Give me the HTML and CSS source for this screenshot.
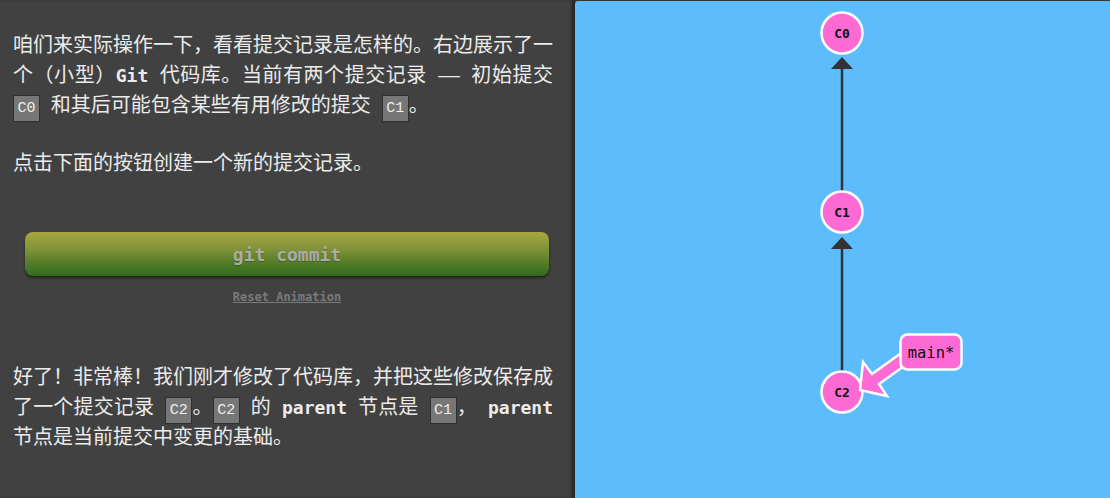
FILE: index.html
```html
<!DOCTYPE html>
<html lang="zh-CN">
<head>
<meta charset="utf-8">
<title>Git Commit</title>
<link rel="stylesheet" href="styles.css">
</head>
<body>
<div class="app">
  <section class="lesson">
    <p class="para">咱们来实际操作一下，看看提交记录是怎样的。右边展示了一个（小型）<strong>Git</strong> 代码库。当前有两个提交记录 <span class="dash">——</span> 初始提交 <code>C0</code> 和其后可能包含某些有用修改的提交 <code>C1</code>。</p>
    <p class="para">点击下面的按钮创建一个新的提交记录。</p>
    <div class="actions">
      <button class="commit-btn" type="button">git commit</button>
      <a class="reset" href="#">Reset Animation</a>
    </div>
    <p class="para">好了！非常棒！我们刚才修改了代码库，并把这些修改保存成了一个提交记录 <code>C2</code>。<code>C2</code> 的 <strong>parent</strong> 节点是 <code>C1</code>， <strong>parent</strong> 节点是当前提交中变更的基础。</p>
  </section>
  <section class="canvas">
    <svg class="graph" viewBox="0 0 535 497" width="535" height="497" xmlns="http://www.w3.org/2000/svg">
      <g class="edges">
        <line x1="267" y1="191" x2="267" y2="64" stroke="#333" stroke-width="2.5"/>
        <polygon points="267,56 256,68 278,68" fill="#333"/>
        <line x1="267" y1="370" x2="267" y2="244" stroke="#333" stroke-width="2.5"/>
        <polygon points="267,236 256,248 278,248" fill="#333"/>
      </g>
      <g class="nodes">
        <circle cx="267" cy="32" r="20.5" fill="#fd6ad4" stroke="#fff" stroke-width="2.5"/>
        <text x="267" y="36.5" class="node-label">C0</text>
        <circle cx="267" cy="211" r="20.5" fill="#fd6ad4" stroke="#fff" stroke-width="2.5"/>
        <text x="267" y="215.5" class="node-label">C1</text>
        <circle cx="267" cy="391" r="20.5" fill="#fd6ad4" stroke="#fff" stroke-width="2.5"/>
        <text x="267" y="395.5" class="node-label">C2</text>
      </g>
      <g class="branch">
        <polygon points="329,350 297,373 288,361 285,389 312,395 304,383 336,360" fill="#fd6ad4" stroke="#fff" stroke-width="2.5" stroke-linejoin="miter"/>
        <rect x="325.5" y="333.5" width="61" height="35" rx="7" fill="#fd6ad4" stroke="#fff" stroke-width="2.5"/>
        <text x="356" y="356.5" class="branch-label">main*</text>
      </g>
    </svg>
  </section>
</div>
</body>
</html>
```

FILE: styles.css
```css
* { box-sizing: border-box; }

html, body {
  margin: 0;
  padding: 0;
  width: 1110px;
  height: 498px;
  overflow: hidden;
  background: #3b3b3b;
}

.app {
  display: flex;
  height: 498px;
}

.lesson {
  width: 575px;
  flex: 0 0 575px;
  background: #414141;
  padding: 30px 22px 0 13px;
  color: #ececec;
  font-family: "DejaVu Sans Mono", "Noto Sans CJK SC", monospace;
  font-size: 20px;
  line-height: 30px;
  word-spacing: -1.2px;
  box-shadow: inset -4px 0 3px rgba(0, 0, 0, 0.22);
}

.para {
  margin: 0 0 28px;
  height: auto;
  text-align: justify;
}

.para strong {
  font-size: 18px;
  line-height: 18px;
  font-weight: bold;
}

.dash {
  font-size: 18px;
  line-height: 18px;
}

.para code {
  font-family: "Liberation Mono", monospace;
  font-size: 15px;
  line-height: 15px;
  padding: 4px 3.5px;
  background: #777;
  color: #eee;
  border: 1px solid #2f2f2f;
  word-spacing: 0;
}

.actions {
  display: flex;
  flex-direction: column;
  align-items: flex-start;
  padding: 26px 0 0;
  margin-bottom: 58px;
}

.commit-btn {
  width: 524px;
  height: 44px;
  margin-left: 12px;
  border: none;
  border-radius: 8px;
  background: linear-gradient(to bottom, #a6a742 0%, #86943a 35%, #4e7a27 75%, #316b1d 100%);
  box-shadow: 0 1px 0 #1d2b12, 0 2px 3px rgba(0, 0, 0, 0.45);
  color: #ababab;
  font-family: "DejaVu Sans Mono", monospace;
  font-weight: bold;
  font-size: 18px;
  word-spacing: 0;
  text-shadow: 0 1px 1px rgba(0, 0, 0, 0.25);
  padding: 0;
}

.reset {
  align-self: center;
  margin-top: 14px;
  margin-left: 8px;
  font-family: "DejaVu Sans Mono", monospace;
  font-weight: bold;
  font-size: 12px;
  line-height: 14px;
  word-spacing: 0;
  color: #7a7a7a;
  text-decoration: underline;
}

.canvas {
  flex: 1;
  position: relative;
  margin-top: 1px;
  background: #5dbcfc;
  border-top-left-radius: 3px;
  box-shadow: -2px 0 3px rgba(0, 0, 0, 0.3);
}

.graph {
  position: absolute;
  left: 0;
  top: 0;
  display: block;
}

.node-label {
  font-family: "DejaVu Sans Mono", monospace;
  font-weight: bold;
  font-size: 13px;
  text-anchor: middle;
  fill: #111;
}

.branch-label {
  font-family: "DejaVu Sans Mono", monospace;
  font-size: 15.5px;
  text-anchor: middle;
  fill: #111;
}
```
